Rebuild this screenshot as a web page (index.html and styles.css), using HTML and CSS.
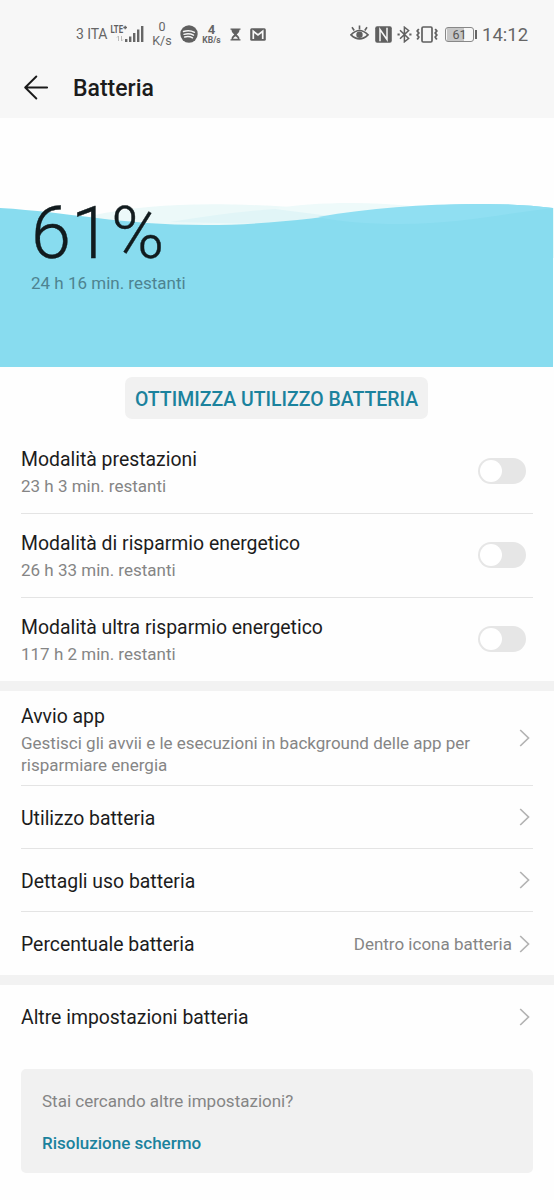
FILE: index.html
```html
<!DOCTYPE html>
<html lang="it">
<head>
<meta charset="utf-8">
<title>Batteria</title>
<link rel="stylesheet" href="styles.css">
</head>
<body>
<header class="top">
  <div class="status">
    <div class="status-left">
      <span class="carrier">3 ITA</span>
      <svg class="signal" width="35" height="22" viewBox="0 0 35 22">
        <text x="0.500" y="9.500" class="lte" textLength="12.500" lengthAdjust="spacingAndGlyphs">LTE</text>
        <path d="M13.300 4.500h3.700M15.200 2.700v3.600" stroke="#666" stroke-width="1.300"/>
        <path d="M8.500 18v-5l-1.500 1.500M11.500 13v5l1.500-1.500" stroke="#bbb" fill="none"/>
        <path d="M15 16h2.400v3H15zM19 13.500h2.400V19H19zM23 10h2.400v9H23zM27 6.500h2.400V19H27zM31 3h2.400v16H31z" fill="#666"/>
      </svg>
      <span class="rate"><span>0</span><span>K/s</span></span>
      <svg class="spotify" width="18" height="18" viewBox="0 0 18 18"><circle cx="9" cy="9" r="8.700" fill="#606060"/><path d="M3.500 6.500q6-1.800 11 .8M4 9.400q5.300-1.500 9.500.8M4.700 12q4.300-1.200 7.800.8" fill="none" stroke="#f7f7f7" stroke-width="1.400" stroke-linecap="round"/></svg>
      <span class="speed"><span class="speed-n">4</span><span class="speed-u">KB/s</span></span>
      <svg class="hourglass" width="11" height="13" viewBox="0 0 11 13"><path d="M.5.5h10v1.300H9.500c0 2.500-1.300 3.400-2.800 4.700 1.500 1.300 2.800 2.200 2.800 4.700h1v1.300H.5v-1.300h1c0-2.500 1.300-3.400 2.800-4.700C2.800 5.200 1.500 4.300 1.500 1.800h-1z" fill="#606060"/><path d="M3 10.800q.5-1.600 2.500-2.600 2 1 2.500 2.600z" fill="#f7f7f7"/></svg>
      <svg class="mail" width="16" height="13" viewBox="0 0 16 13"><rect x=".2" y=".3" width="15.600" height="12.400" rx="1.500" fill="#606060"/><path d="M3.300 11V3.300L8 7l4.700-3.700V11" fill="none" stroke="#f7f7f7" stroke-width="1.700"/></svg>
    </div>
    <div class="status-right">
      <svg class="eye" width="20" height="18" viewBox="0 0 20 18"><path d="M1 10.800Q9.500 2.200 18 10.800 9.500 19 1 10.800z" fill="none" stroke="#606060" stroke-width="1.700"/><circle cx="9.500" cy="10.800" r="3.200" fill="#606060"/><path d="M9.500 1.500v4M2 3.200l2.200 3.300M17 3.200l-2.200 3.300" stroke="#606060" stroke-width="1.600"/></svg>
      <svg class="nfc" width="17" height="17" viewBox="0 0 17 17"><rect x=".2" y=".2" width="16.600" height="16.600" rx="2" fill="#606060"/><path d="M5 15.300V3.500l7 10M12 1.700v11.800L5 3.500" fill="none" stroke="#f7f7f7" stroke-width="1.500"/></svg>
      <svg class="bluetooth" width="15" height="17" viewBox="0 0 15 17"><path d="M3 4.200l8.600 8.300-4.200 3.300V1.200l4.200 3.300L3 12.800" fill="none" stroke="#606060" stroke-width="1.500"/><path d="M.5 8.500h2.200M12.300 8.500h2.200" stroke="#606060" stroke-width="1.900"/></svg>
      <svg class="vibrate" width="22" height="17" viewBox="0 0 22 17"><rect x="6" y="1" width="10" height="15" rx="1.200" fill="none" stroke="#606060" stroke-width="1.700"/><path d="M2.800 3l-1.600 2 1.600 2-1.600 2 1.600 2-1.600 2.500M19.200 3l1.600 2-1.600 2 1.600 2-1.600 2 1.600 2.500" fill="none" stroke="#606060" stroke-width="1.800"/></svg>
      <span class="battery"><span class="battery-case">61</span><span class="battery-tip"></span></span>
      <span class="clock">14:12</span>
    </div>
  </div>
  <div class="titlebar">
    <svg class="back" width="24" height="25" viewBox="0 0 24 25"><path d="M12.300 1.500L1.200 12.500l11.100 11M1.500 12.500h21.700" fill="none" stroke="#1a1a1a" stroke-width="1.900" stroke-linecap="round" stroke-linejoin="round"/></svg>
    <h1 class="title">Batteria</h1>
  </div>
</header>

<section class="level">
  <svg class="waves" width="554" height="249" viewBox="0 0 554 249">
    <path d="M90 98C150 85 210 84 290 89S440 110 554 90V140H90z" fill="#ecf9f9"/>
    <path d="M274 91C310 84 370 83 420 89V110H274z" fill="#eefafa"/>
    <path d="M170 104Q230 94 275 91L330 98 270 106z" fill="#e1f5f7"/>
    <path d="M0 90C70 94 120 107 205 107C310 107 380 86 480 86Q520 86 553 90V249H0z" fill="#88dcef"/>
    <path d="M318 99C370 90 420 86 480 86Q520 86 553 90C500 96 460 106 400 106Q350 106 318 99z" fill="#90dff2"/>
  </svg>
  <div class="level-text">
    <div class="percent">61%</div>
    <div class="remaining">24 h 16 min. restanti</div>
  </div>
</section>

<div class="optimize"><button class="optimize-btn"><span>OTTIMIZZA UTILIZZO BATTERIA</span></button></div>

<section class="group modes">
  <div class="row"><div><div class="label">Modalità prestazioni</div><div class="sub">23 h 3 min. restanti</div></div><span class="toggle"></span></div>
  <div class="row"><div><div class="label">Modalità di risparmio energetico</div><div class="sub">26 h 33 min. restanti</div></div><span class="toggle"></span></div>
  <div class="row"><div><div class="label">Modalità ultra risparmio energetico</div><div class="sub">117 h 2 min. restanti</div></div><span class="toggle"></span></div>
</section>
<div class="band"></div>
<section class="group links">
  <div class="row tall"><div><div class="label">Avvio app</div><div class="sub">Gestisci gli avvii e le esecuzioni in background delle app per<br>risparmiare energia</div></div><svg class="chev" width="11" height="18" viewBox="0 0 11 18"><path d="M1.200 1l8.300 8-8.300 8"/></svg></div>
  <div class="row"><div class="label">Utilizzo batteria</div><svg class="chev" width="11" height="18" viewBox="0 0 11 18"><path d="M1.200 1l8.300 8-8.300 8"/></svg></div>
  <div class="row"><div class="label">Dettagli uso batteria</div><svg class="chev" width="11" height="18" viewBox="0 0 11 18"><path d="M1.200 1l8.300 8-8.300 8"/></svg></div>
  <div class="row"><div class="label">Percentuale batteria</div><div class="value">Dentro icona batteria</div><svg class="chev" width="11" height="18" viewBox="0 0 11 18"><path d="M1.200 1l8.300 8-8.300 8"/></svg></div>
</section>
<div class="band"></div>
<section class="group links">
  <div class="row"><div class="label">Altre impostazioni batteria</div><svg class="chev" width="11" height="18" viewBox="0 0 11 18"><path d="M1.200 1l8.300 8-8.300 8"/></svg></div>
</section>
<aside class="card">
  <div class="card-q">Stai cercando altre impostazioni?</div>
  <a class="card-link">Risoluzione schermo</a>
</aside>
</body>
</html>
```
FILE: styles.css
```css
* { box-sizing: border-box; }
body { margin: 0; width: 554px; height: 1200px; overflow: hidden; background: #fefefe; color: #1c1c1c; font-family: Roboto, "Liberation Sans", sans-serif; }
svg { display: block; flex: none; }
.top { height: 118px; background: #f7f7f7; }
.status { height: 60px; padding: 8px 26px 0 76px; display: flex; justify-content: space-between; color: #666; white-space: nowrap; }
.status-left, .status-right { display: flex; align-items: center; height: 52px; }
.carrier { font-size: 14px; width: 34px; letter-spacing: -.1px; }
.signal { margin-top: -1px; }
.lte { font-size: 11px; font-weight: 700; fill: #606060; }
.rate { width: 22px; margin-left: 6px; display: flex; flex-direction: column; align-items: center; font-size: 12.500px; line-height: 14px; }
.spotify { margin-left: 7px; }
.speed { width: 21px; margin-left: 3px; display: flex; flex-direction: column; align-items: center; font-weight: 700; }
.speed-n { font-size: 13px; line-height: 12px; }
.speed-u { font-size: 8.500px; line-height: 9px; }
.hourglass { margin-left: 8px; }
.mail { margin-left: 9px; }
.eye { margin-top: -3px; }
.nfc { margin-left: 5px; }
.bluetooth { margin-left: 5px; }
.vibrate { margin-left: 4px; }
.battery { display: flex; align-items: center; margin-left: 7px; }
.battery-case { width: 29px; height: 15px; border: 1px solid #888; border-radius: 3px; background: linear-gradient(90deg, #f7f7f7 1px, #c6c6c6 1px, #c6c6c6 18px, #f7f7f7 18px); font-size: 12.500px; line-height: 14px; text-align: center; color: #555; }
.battery-tip { width: 2px; height: 9px; margin-left: 1px; background: #666; }
.clock { width: 46px; margin-left: 5px; padding-top: 1px; font-size: 18.500px; }
.titlebar { display: flex; align-items: center; gap: 25px; height: 56px; padding-left: 24px; }
.back { margin-top: -2px; }
.title { margin: 0; padding-top: 1px; font-size: 23px; font-weight: 500; line-height: 30px; }

.level { height: 248px; display: grid; }
.waves, .level-text { grid-area: 1 / 1; }
.level-text { padding: 81px 0 0 31px; }
.percent { height: 70px; font-size: 72px; line-height: 70px; font-weight: 300; color: #111b1e; -webkit-text-stroke: .4px #111b1e; }
.remaining { margin-top: 4px; font-size: 17px; line-height: 20px; color: #4e8390; }

.optimize { height: 64px; padding: 11px 1px 0 0; display: flex; justify-content: center; align-items: flex-start; }
.optimize-btn { width: 303px; height: 42px; border: 0; border-radius: 7px; padding: 2px 0 0; background: #f1f1f1; color: #1b829d; font: 500 19.450px Roboto, "Liberation Sans", sans-serif; white-space: nowrap; }

.group { padding: 0 21px; }
.row { display: flex; align-items: center; justify-content: space-between; border-bottom: 1px solid #e4e4e4; }
.row:last-child { border-bottom: 0; }
.label { font-size: 19.400px; line-height: 24px; }
.sub { font-size: 17px; line-height: 22px; color: #858585; }
.modes .row { height: 84px; padding-top: 2px; }
.modes .row:last-child { height: 83px; }
.modes .sub { margin-top: 3px; }
.toggle { width: 48px; height: 26px; margin: -4px 7px 0 0; padding: 2px; border-radius: 13px; background: #e6e6e6; }
.toggle::before { content: ""; display: block; width: 22px; height: 22px; border-radius: 50%; background: #fff; }
.band { height: 10px; background: #f2f2f2; }
.links .row { height: 63px; }
.links .label { padding-top: 3px; }
.links .row.tall { height: 95px; }
.tall .label { padding-top: 5px; }
.tall .sub { margin-top: 3px; }
.chev { margin-right: 3px; fill: none; stroke: #b3b3b3; stroke-width: 1.700; }
.value { margin: 0 7px 0 auto; font-size: 17px; line-height: 22px; color: #858585; }
.card { height: 104px; margin: 21px 21px 0; padding: 21px; border-radius: 5px; background: #f1f1f1; font-size: 17px; line-height: 22px; }
.card-q { color: #858585; }
.card-link { display: block; margin-top: 20px; color: #1b829d; font-weight: 500; }
```
